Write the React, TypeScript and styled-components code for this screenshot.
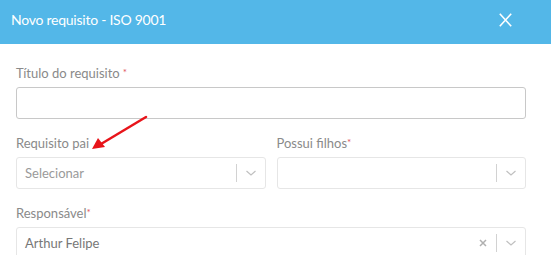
import React from "react";
import styled, { createGlobalStyle } from "styled-components";

const Global = createGlobalStyle`
  html, body { margin: 0; padding: 0; background: #fff; }
  body { font-family: Lato, "Open Sans", sans-serif; overflow: hidden; }
`;

const Modal = styled.div`
  position: relative;
  width: 551px;
  height: 255px;
  background: #fff;
  overflow: hidden;
`;

const Header = styled.div`
  height: 44px;
  background: #53b7e8;
  display: flex;
  align-items: center;
  justify-content: space-between;
  padding: 0 11px 5px 11px;
  box-sizing: border-box;
`;

const Title = styled.h1`
  margin: 0;
  font-size: 14px;
  font-weight: 400;
  color: #fff;
  letter-spacing: -0.25px;
`;

const Close = styled.button`
  border: 0;
  background: none;
  padding: 0;
  width: 13px;
  height: 14px;
  display: flex;
  margin-right: 28px;
  cursor: pointer;
`;

const Body = styled.div`
  padding: 21px 25px 0 16px;
  display: flex;
  flex-direction: column;
  gap: 16px;
`;

const Row = styled.div`
  display: grid;
  grid-template-columns: 1fr 1fr;
  column-gap: 11px;
`;

const Field = styled.div`
  display: flex;
  flex-direction: column;
  gap: 6px;
`;

const Label = styled.label`
  font-size: 13px;
  color: #8a8a8a;
  line-height: 16px;
  height: 16px;
`;

const Star = styled.span<{ $gap?: boolean }>`
  color: #e0525b;
  font-size: 10px;
  line-height: 0;
  position: relative;
  top: -2px;
  margin-left: ${(p) => (p.$gap ? "3px" : "0")};
`;

const Input = styled.div`
  height: 32px;
  box-sizing: border-box;
  border: 1px solid #c8c8c8;
  border-radius: 3px;
`;

const Select = styled.div`
  height: 32px;
  box-sizing: border-box;
  border: 1px solid #e6e6e6;
  border-radius: 3px;
  display: flex;
  align-items: center;
  padding-left: 8px;
`;

const Value = styled.span<{ $placeholder?: boolean }>`
  flex: 1;
  font-size: 13px;
  color: ${(p) => (p.$placeholder ? "#9a9a9a" : "#777")};
`;

const Indicators = styled.div`
  display: flex;
  align-items: center;
  height: 100%;
`;

const Sep = styled.span`
  width: 1px;
  height: 18px;
  background: #d2d2d2;
`;

const IconBox = styled.span<{ $w?: number }>`
  width: ${(p) => p.$w ?? 28}px;
  display: flex;
  justify-content: center;
  align-items: center;
`;

const Arrow = styled.svg`
  position: absolute;
  left: 85px;
  top: 112px;
`;

const Chevron = () => (
  <IconBox>
    <svg width="12" height="8" viewBox="0 0 12 8">
      <path d="M1.5 2 L6 6 L10.5 2" stroke="#c0c0c0" strokeWidth="1.2" fill="none" />
    </svg>
  </IconBox>
);

export default function App() {
  return (
    <>
      <Global />
      <Modal>
        <Header>
          <Title>Novo requisito - ISO 9001</Title>
          <Close aria-label="Fechar">
            <svg width="13" height="14" viewBox="0 0 13 14">
              <path d="M0.8 0.8 L12.2 13.2 M12.2 0.8 L0.8 13.2" stroke="#fff" strokeWidth="1.6" />
            </svg>
          </Close>
        </Header>
        <Body>
          <Field>
            <Label>
              Título do requisito<Star $gap>*</Star>
            </Label>
            <Input />
          </Field>
          <Row>
            <Field>
              <Label>Requisito pai</Label>
              <Select>
                <Value $placeholder>Selecionar</Value>
                <Indicators>
                  <Sep />
                  <Chevron />
                </Indicators>
              </Select>
            </Field>
            <Field>
              <Label>
                Possui filhos<Star>*</Star>
              </Label>
              <Select>
                <Value />
                <Indicators>
                  <Sep />
                  <Chevron />
                </Indicators>
              </Select>
            </Field>
          </Row>
          <Field>
            <Label>
              Responsável<Star>*</Star>
            </Label>
            <Select>
              <Value>Arthur Felipe</Value>
              <Indicators>
                <IconBox $w={26}>
                  <svg width="10" height="10" viewBox="0 0 10 10">
                    <path d="M2 2 L8 8 M8 2 L2 8" stroke="#b0b0b0" strokeWidth="1.5" />
                  </svg>
                </IconBox>
                <Sep />
                <Chevron />
              </Indicators>
            </Select>
          </Field>
        </Body>
        <Arrow width="70" height="45" viewBox="0 0 70 45">
          <path d="M61 5 L16 32" stroke="#e8141a" strokeWidth="2.5" strokeLinecap="round" />
          <path d="M7 37 L13 26 L20 35 Z" fill="#e8141a" />
        </Arrow>
      </Modal>
    </>
  );
}
